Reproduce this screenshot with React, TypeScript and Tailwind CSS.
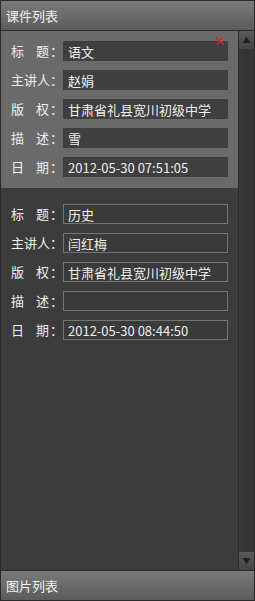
const font = { fontFamily: '"Noto Sans CJK SC", "Liberation Sans", sans-serif' };

type Course = { title: string; speaker: string; owner: string; desc: string; date: string };

const courses: Course[] = [
  { title: '语文', speaker: '赵娟', owner: '甘肃省礼县宽川初级中学', desc: '雪', date: '2012-05-30 07:51:05' },
  { title: '历史', speaker: '闫红梅', owner: '甘肃省礼县宽川初级中学', desc: '', date: '2012-05-30 08:44:50' },
];

const labels: [string, string][] = [
  ['标', '题'],
  ['主讲人', ''],
  ['版', '权'],
  ['描', '述'],
  ['日', '期'],
];

const Label = ({ parts }: { parts: [string, string] }) => (
  <div className="flex w-[52px] shrink-0 items-center whitespace-nowrap text-[13px] text-[#eeeeee]">
    {parts[1] ? (
      <span className="flex w-[39px] shrink-0 justify-between pr-[1px]">
        <span>{parts[0]}</span>
        <span>{parts[1]}</span>
      </span>
    ) : (
      <span className="w-[39px] shrink-0">{parts[0]}</span>
    )}
    <span className="w-[13px] shrink-0">：</span>
  </div>
);

const CourseCard = ({ course, selected }: { course: Course; selected: boolean }) => {
  const values = [course.title, course.speaker, course.owner, course.desc, course.date];
  return (
    <div className={`relative flex flex-col gap-[9px] pb-[11px] pl-[10px] pt-[10px] ${selected ? 'bg-[#6a6a6a]' : ''}`}>
      {selected && (
        <span className="absolute right-[12px] top-[4px] text-[12px] font-bold leading-none text-[#e02020]">×</span>
      )}
      {values.map((value, i) => (
        <div key={i} className="flex h-[20px] items-center">
          <Label parts={labels[i]} />
          <div
            className={`flex h-[20px] w-[165px] items-center whitespace-nowrap text-[13px] leading-none text-[#eeeeee] ${
              selected ? 'bg-[#3f3f3f] px-[5px]' : 'border border-[#747474] bg-[#3a3a3a] px-[4px]'
            }`}
          >
            {value}
          </div>
        </div>
      ))}
    </div>
  );
};

const Header = ({ text }: { text: string }) => (
  <div className="flex h-[31px] shrink-0 items-center border border-[#2a2a2a] bg-gradient-to-b from-[#7a7a7a] to-[#5c5c5c] px-[5px] text-[13px] text-[#f2f2f2]">
    {text}
  </div>
);

export default function App() {
  return (
    <div className="flex h-[601px] w-[255px] flex-col bg-[#2e2e2e]" style={font}>
      <Header text="课件列表" />
      <div className="flex min-h-0 flex-1 border-x border-[#2a2a2a]">
        <div className="flex flex-1 flex-col gap-[6px] bg-[#3c3c3c]">
          <CourseCard course={courses[0]} selected />
          <CourseCard course={courses[1]} selected={false} />
        </div>
        <div className="flex w-[16px] flex-col border-l border-[#2c2c2c] bg-[#353535]">
          <div className="flex h-[18px] items-center justify-center bg-gradient-to-b from-[#5a5a5a] to-[#444444] text-[8px] text-[#1f1f1f]">▲</div>
          <div className="flex-1 bg-gradient-to-r from-[#3a3a3a] via-[#333333] to-[#3a3a3a]" />
          <div className="flex h-[18px] items-center justify-center bg-gradient-to-b from-[#5a5a5a] to-[#444444] text-[8px] text-[#1f1f1f]">▼</div>
        </div>
      </div>
      <Header text="图片列表" />
    </div>
  );
}
